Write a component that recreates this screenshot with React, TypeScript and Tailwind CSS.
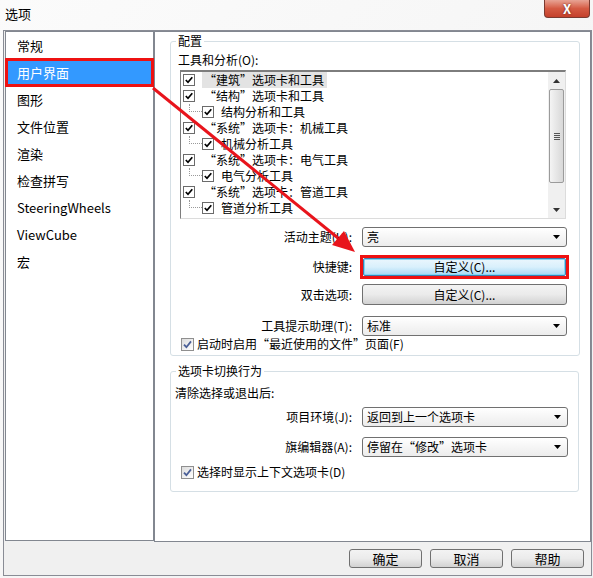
import type { ReactNode } from "react";

const navItems = ["常规", "用户界面", "图形", "文件位置", "渲染", "检查拼写", "SteeringWheels", "ViewCube", "宏"];

const treeRows: { text: string; child?: boolean; active?: boolean }[] = [
  { text: "“建筑”选项卡和工具", active: true },
  { text: "“结构”选项卡和工具" },
  { text: "结构分析和工具", child: true },
  { text: "“系统”选项卡：机械工具" },
  { text: "机械分析工具", child: true },
  { text: "“系统”选项卡：电气工具" },
  { text: "电气分析工具", child: true },
  { text: "“系统”选项卡：管道工具" },
  { text: "管道分析工具", child: true },
  { text: "“体量和场地”选项卡和工具" },
];

function TreeCheck() {
  return (
    <span className="flex h-[12px] w-[12px] shrink-0 items-center justify-center border border-[#6b6b6b] bg-white">
      <svg viewBox="0 0 8 8" className="h-[8px] w-[8px]">
        <path d="M0.8 4 L3 6.3 L7.3 1.2" stroke="#000" strokeWidth="1.7" fill="none" />
      </svg>
    </span>
  );
}

function Win7Check() {
  return (
    <span className="flex h-[13px] w-[13px] shrink-0 items-center justify-center border border-[#8f8f8f] bg-gradient-to-br from-[#dcdcdc] to-white">
      <svg viewBox="0 0 9 9" className="h-[9px] w-[9px]">
        <path d="M1 4.6 L3.4 7.2 L8 1.4" stroke="#4a5f97" strokeWidth="1.8" fill="none" />
      </svg>
    </span>
  );
}

function Combo({ text, wide }: { text: string; wide?: boolean }) {
  return (
    <div
      className={`flex h-[20px] items-center justify-between rounded-[3px] border border-[#707070] bg-gradient-to-b from-white to-[#ececec] pl-[4px] pr-[6px] ${
        wide ? "w-[206px]" : "w-[205px]"
      }`}
    >
      <span>{text}</span>
      <svg viewBox="0 0 7 4" className="h-[4px] w-[7px]">
        <path d="M0 0 H7 L3.5 4 Z" fill="#000" />
      </svg>
    </div>
  );
}

function Button({ children, className = "" }: { children: ReactNode; className?: string }) {
  return (
    <div
      className={`flex items-center justify-center rounded-[3px] border border-[#707070] bg-gradient-to-b from-[#f3f3f3] via-[#ebebeb] to-[#d2d2d2] ${className}`}
    >
      {children}
    </div>
  );
}

function Row({ label, children, className = "" }: { label: string; children: ReactNode; className?: string }) {
  return (
    <div className={`flex items-center ${className}`}>
      <span className="w-[181px] shrink-0 text-right">{label}</span>
      <div className="ml-[10px]">{children}</div>
    </div>
  );
}

export default function App() {
  return (
    <div className="relative h-[578px] w-[593px] overflow-hidden bg-gradient-to-br from-[#fbfbfb] via-[#f6f6f6] to-[#eeeff1] font-['Noto_Sans_CJK_SC','Liberation_Sans',sans-serif] text-[12px] leading-[16px] text-black">
      {/* title bar */}
      <div className="flex h-[30px] items-start justify-between">
        <span className="ml-[5px] mt-[6px] text-[13px]">选项</span>
        <div className="mr-[3px] flex h-[18px] w-[46px] items-center justify-center rounded-b-[4px] border border-t-0 border-[#7a3a30] bg-gradient-to-b from-[#e7a394] via-[#d45a43] to-[#c4402b]">
          <span className="text-[13px] font-bold leading-none text-white [text-shadow:0_0_2px_#5a1a10]">X</span>
        </div>
      </div>

      {/* frame */}
      <div className="ml-[3px] flex h-[546px] w-[589px] flex-col border border-[#898c95] bg-[#f0f0f0]">
        <div className="flex h-[511px]">
          {/* nav list */}
          <div className="ml-[1px] h-[510px] w-[149px] border border-[#828790] bg-white">
            {navItems.map((item) =>
              item === "用户界面" ? (
                <div
                  key={item}
                  className="relative z-10 -mx-px -my-px flex h-[29px] items-center border-[3px] border-[#ee1111] bg-[#3399ff] pl-[9px] text-[13px] text-white"
                >
                  {item}
                </div>
              ) : (
                <div key={item} className="flex h-[27px] items-center pl-[11px] text-[13px]">
                  {item}
                </div>
              )
            )}
          </div>

          {/* right panel */}
          <div className="h-[511px] w-[437px] border border-[#828790] bg-white">
            <fieldset className="m-0 ml-[15px] mt-[1px] w-[410px] rounded-[3px] border border-[#d5dfe5] p-0 pb-[4px]">
              <legend className="ml-[5px] px-[2px] p-0">配置</legend>
              <div className="mt-[3px] pl-[7px]">工具和分析(O):</div>
              <div className="ml-[9px] mt-[2px] flex h-[149px] w-[386px] border border-t-2 border-[#7d7d7d] border-r-[#dcdcdc] border-b-[#dcdcdc] bg-white">
                <div className="flex-1 overflow-hidden">
                  {treeRows.map((row) => (
                    <div key={row.text} className="flex h-[16px] items-center">
                      {row.child ? (
                        <>
                          <span className="ml-[8px] h-[8px] w-[13px] self-start border-b border-l border-dotted border-[#9a9a9a]" />
                          <TreeCheck />
                          <span className="ml-[7px]">{row.text}</span>
                        </>
                      ) : (
                        <>
                          <span className="ml-[2px]" />
                          <TreeCheck />
                          <span className={`ml-[7px] pl-[2px] pr-[3px] ${row.active ? "bg-[#e3e3e3]" : ""}`}>{row.text}</span>
                        </>
                      )}
                    </div>
                  ))}
                </div>
                <div className="flex w-[17px] flex-col bg-[#f0f0f0]">
                  <div className="flex h-[17px] items-center justify-center">
                    <svg viewBox="0 0 7 4" className="h-[4px] w-[7px]">
                      <path d="M0 4 H7 L3.5 0 Z" fill="#333" />
                    </svg>
                  </div>
                  <div className="mx-[1px] flex h-[94px] items-center justify-center rounded-[2px] border border-[#9b9b9b] bg-gradient-to-r from-[#f4f4f4] to-[#d8d8d8]">
                    <div className="flex flex-col gap-[1px]">
                      <span className="h-px w-[6px] bg-[#555]" />
                      <span className="h-px w-[6px] bg-[#555]" />
                      <span className="h-px w-[6px] bg-[#555]" />
                      <span className="h-px w-[6px] bg-[#555]" />
                    </div>
                  </div>
                  <div className="flex-1" />
                  <div className="flex h-[17px] items-center justify-center">
                    <svg viewBox="0 0 7 4" className="h-[4px] w-[7px]">
                      <path d="M0 0 H7 L3.5 4 Z" fill="#333" />
                    </svg>
                  </div>
                </div>
              </div>

              <Row label="活动主题(H):" className="mt-[8px]">
                <Combo text="亮" />
              </Row>
              <Row label="快捷键:" className="mt-[8px]">
                <div className="-ml-[2px] flex h-[24px] w-[209px] border-[3px] border-[#ee1111]">
                  <div className="flex flex-1 items-center justify-center rounded-[2px] border border-[#3c7fb1] bg-gradient-to-b from-[#eaf6fd] via-[#d9f0fc] to-[#a7d9f5] shadow-[inset_0_0_0_1px_#7fd7f5]">
                    自定义(C)...
                  </div>
                </div>
              </Row>
              <Row label="双击选项:" className="mt-[5px]">
                <Button className="h-[21px] w-[205px]">自定义(C)...</Button>
              </Row>
              <Row label="工具提示助理(T):" className="mt-[11px]">
                <Combo text="标准" />
              </Row>
              <div className="ml-[10px] mt-[1px] flex h-[14px] items-center gap-[3px]">
                <Win7Check />
                <span>启动时启用“最近使用的文件”页面(F)</span>
              </div>
            </fieldset>

            <fieldset className="m-0 ml-[15px] mt-[7px] w-[409px] rounded-[3px] border border-[#d5dfe5] p-0 pb-[12px]">
              <legend className="ml-[5px] px-[2px] p-0">选项卡切换行为</legend>
              <div className="mt-[6px] pl-[4px]">清除选择或退出后:</div>
              <Row label="项目环境(J):" className="mt-[6px]">
                <Combo text="返回到上一个选项卡" wide />
              </Row>
              <Row label="旗编辑器(A):" className="mt-[10px]">
                <Combo text="停留在“修改”选项卡" wide />
              </Row>
              <div className="ml-[10px] mt-[8px] flex h-[14px] items-center gap-[3px]">
                <Win7Check />
                <span>选择时显示上下文选项卡(D)</span>
              </div>
            </fieldset>
          </div>
        </div>

        {/* footer */}
        <div className="flex h-[33px] items-center justify-end gap-[8px] pr-[7px] text-[13px]">
          <Button className="h-[19px] w-[73px]">确定</Button>
          <Button className="h-[19px] w-[73px]">取消</Button>
          <Button className="h-[19px] w-[73px]">帮助</Button>
        </div>
      </div>

      {/* red annotation arrow */}
      <svg className="pointer-events-none absolute left-0 top-0 h-[578px] w-[593px]" viewBox="0 0 593 578">
        <line x1="153" y1="88" x2="338" y2="238" stroke="#e8141c" strokeWidth="3" />
        <polygon points="355,252 332,245 344,231" fill="#e8141c" />
      </svg>
    </div>
  );
}
